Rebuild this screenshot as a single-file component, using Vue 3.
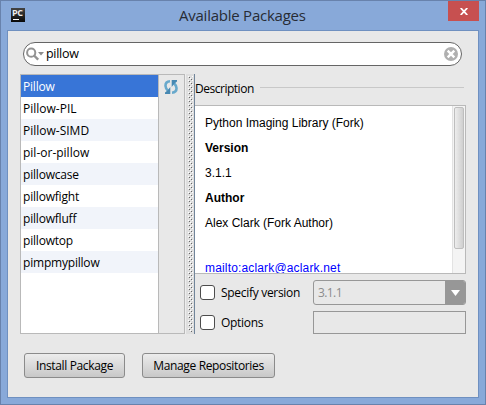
<script setup>
import { ref } from 'vue'

const query = ref('pillow')
const selected = ref(0)
const packages = [
  'Pillow',
  'Pillow-PIL',
  'Pillow-SIMD',
  'pil-or-pillow',
  'pillowcase',
  'pillowfight',
  'pillowfluff',
  'pillowtop',
  'pimpmypillow'
]
</script>

<template>
  <div class="window">
    <header class="titlebar">
      <div class="logo"><span>PC</span><i></i></div>
      <h1>Available Packages</h1>
      <button class="close" aria-label="Close">
        <svg width="8" height="7" viewBox="0 0 8 7"><path d="M.7 0 7.3 7M7.3 0 .7 7" stroke="#fff" stroke-width="1.8" /></svg>
      </button>
    </header>

    <main class="client">
      <div class="search">
        <svg class="lens" width="18" height="14" viewBox="0 0 18 14">
          <circle cx="5.2" cy="5.700" r="4.1" fill="none" stroke="#939393" stroke-width="2" />
          <path d="M8 8.500l4.200 4.200" stroke="#939393" stroke-width="2.4" />
          <path d="M12 4.900h6l-3 3.600z" fill="#8c8c8c" />
        </svg>
        <span class="query">{{ query }}</span>
        <svg class="clear" width="14" height="14" viewBox="0 0 14 14">
          <circle cx="7" cy="7" r="7" fill="#b0b0b0" />
          <path d="M3.7 3.7l6.600 6.600M10.300 3.7l-6.600 6.600" stroke="#fff" stroke-width="2.4" />
        </svg>
      </div>

      <div class="split">
        <section class="browser">
          <ul class="list">
            <li
              v-for="(name, i) in packages"
              :key="name"
              :class="{ selected: i === selected, hyphenated: name.includes('-') }"
              @click="selected = i"
            >{{ name }}</li>
          </ul>
          <div class="tools">
            <svg width="14" height="14" viewBox="0 0 14 14">
              <g fill="none" stroke="#68a9cc" stroke-width="2.6">
                <path d="M6 1.300C2.700 1.500 1.400 3.500 1.500 6c.1 2 1 3.300 2.500 4.700" />
                <path d="M8 12.700c3.300-.2 4.600-2.200 4.500-4.700-.1-2-1-3.300-2.500-4.700" />
              </g>
              <path d="M6.300 7v7H1v-1.400l2.500-2z" fill="#4789b3" />
              <path d="M7.700 7V0H13v1.400l-2.500 2z" fill="#4789b3" />
            </svg>
          </div>
        </section>

        <div class="divider">
          <svg width="8" height="260">
            <defs>
              <pattern id="grip" width="4" height="4" patternUnits="userSpaceOnUse">
                <path d="M0 0h1v1H0zM2 2h1v1H2z" fill="#fff" />
                <path d="M1 1h1v1H1zM3 3h1v1H3z" fill="#666" />
              </pattern>
            </defs>
            <rect x="2" y="2" width="5" height="256" fill="url(#grip)" shape-rendering="crispEdges" />
          </svg>
        </div>

        <section class="details">
          <div class="heading"><h2>Description</h2><i></i></div>
          <div class="description">
            <div class="copy">
              <p class="summary">Python Imaging Library (Fork)</p>
              <p class="strong">Version</p>
              <p>3.1.1</p>
              <p class="strong">Author</p>
              <p>Alex Clark (Fork Author)</p>
              <p class="mail"><a>mailto:aclark@aclark.net</a></p>
            </div>
            <div class="track"><div class="thumb"></div></div>
          </div>
          <div class="option version">
            <span class="box"></span><label>Specify version</label>
            <div class="combo">
              <span>3.1.1</span>
              <b><svg width="9" height="6" viewBox="0 0 9 6"><path d="M0 0h9L4.500 6z" fill="#fff" /></svg></b>
            </div>
          </div>
          <div class="option extra">
            <span class="box"></span><label>Options</label>
            <div class="field"></div>
          </div>
        </section>
      </div>

      <footer class="actions">
        <button class="btn install">Install Package</button>
        <button class="btn manage">Manage Repositories</button>
      </footer>
    </main>
  </div>
</template>

<style>
body { margin: 0; }
</style>

<style scoped>
* { box-sizing: border-box; }
h1, h2, p, ul { margin: 0; padding: 0; font-weight: normal; }
svg { display: block; }
button { padding: 0; font-family: inherit; }
.window {
  width: 486px; height: 405px; padding: 0 6px 6px;
  background: #88a9d9; border: 1px solid #6882ac; color: #000;
  font: 12px/16px "Open Sans", "Noto Sans", sans-serif; white-space: nowrap;
}
.titlebar { display: flex; height: 29px; }
.logo { width: 14px; height: 14px; margin: 7px 0 0 4px; padding: 1px 0 0 1px; background: linear-gradient(#444, #080808); }
.logo span { display: block; color: #eee; font: bold 9px/8px "Open Sans", sans-serif; letter-spacing: -.3px; }
.logo i { display: block; width: 6px; height: 1px; margin: 2px 0 0 1px; background: #fff; }
h1 { flex: 1; padding: 4px 0 0 154px; color: #272c35; font-size: 15px; line-height: 21px; letter-spacing: -.24px; }
.close { display: flex; align-items: center; justify-content: center; width: 31px; height: 20px; border: 0; background: #c75050; }
.client { height: 368px; padding: 11px 12px 0 12px; background: #e8e8e8; border: 1px solid #6f90c0; }
.search {
  display: flex; align-items: center; width: 439px; height: 24px; margin-left: 3px;
  padding: 0 3px 0 2px; background: #fff; border: 1px solid #656565; border-radius: 12px;
}
.query { flex: 1; margin-left: 2px; font-size: 12.5px; letter-spacing: -.3px; }
.split { display: flex; margin-top: 8px; height: 260px; }
.browser { display: flex; width: 165px; border: 1px solid #b9b9b9; }
.list { width: 138px; border-right: 1px solid #b9b9b9; background: #fff; list-style: none; }
li { height: 22px; padding: 4px 0 0 2px; letter-spacing: -.2px; }
li:nth-child(odd) { background: #f1f4fa; }
li.hyphenated { letter-spacing: 0; }
li.selected { background: #3875d7; color: #fff; }
.tools { padding: 5px 0 0 5px; }
.divider { width: 10px; background: #dedede; border-left: 1px solid #eee; border-right: 1px solid #71859a; }
.details { width: 271px; }
.heading { display: flex; align-items: center; height: 31px; }
h2 { width: 65px; margin-top: -1px; font-size: 12px; line-height: 16px; letter-spacing: -.48px; }
.heading i { width: 204px; height: 1px; margin-top: -4px; background: #c8c8c8; }
.description { display: flex; height: 169px; background: #fff; border: 1px solid #b9b9b9; border-left: 0; overflow: hidden; }
.copy { flex: 1; padding: 10px 0 0 10px; font: 12px/15px "Liberation Sans", Arial, sans-serif; }
.copy p { height: 25px; }
.strong { font-weight: bold; }
.copy .mail { margin-top: 20px; }
.mail a { color: #00f; letter-spacing: .16px; }
.track { width: 13px; padding: 1px 1px 0; background: #f4f4f4; border-left: 1px solid #e3e3e3; }
.thumb { width: 10px; height: 142px; border: 1px solid #bebebe; border-radius: 2px; background: linear-gradient(90deg, #ededed, #cfcfcf); }
.option { display: flex; align-items: center; }
.version { margin-top: 6px; height: 25px; }
.extra { margin-top: 6px; height: 23px; }
.box { width: 15px; height: 15px; margin-left: 5px; background: #fff; border: 1px solid #4c4c4c; border-radius: 3px; }
label { width: 92px; margin: 1px 0 0 6px; letter-spacing: -.3px; }
.combo { display: flex; width: 153px; height: 25px; background: #e8e8e8; border: 1px solid #979797; border-radius: 3px; overflow: hidden; }
.combo span { flex: 1; padding: 4px 0 0 4px; color: #8c8c8c; letter-spacing: -.6px; }
.combo b { display: flex; width: 20px; align-items: center; justify-content: center; background: #979797; }
.field { width: 153px; height: 23px; border: 1px solid #979797; }
.actions { display: flex; gap: 17px; margin: 19px 0 0 4px; }
.btn { height: 25px; border: 1px solid #8b8b8b; border-radius: 3px; background: linear-gradient(#ececec, #c8c8c8); color: #000; font-size: 12px; line-height: 23px; letter-spacing: -.35px; }
.install { width: 101px; }
.manage { width: 133px; }
</style>
